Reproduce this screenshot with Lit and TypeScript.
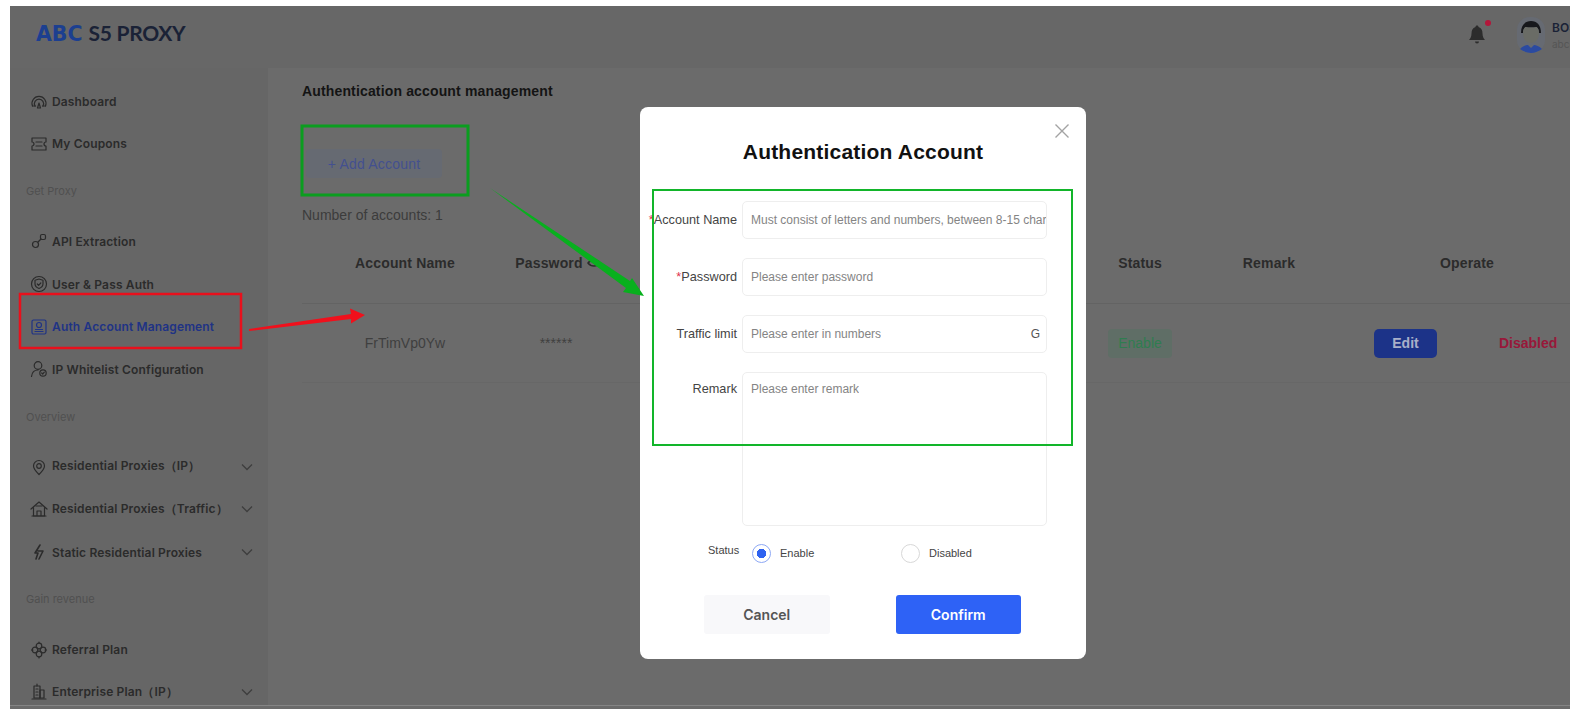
import { LitElement, html, css, svg } from "lit";
import { customElement } from "lit/decorators.js";

const ic = (p: unknown, size = 18) => html`<svg class="ic" width=${size} height=${size} viewBox="0 0 18 18" fill="none" stroke="currentColor" stroke-width="1.2" stroke-linecap="round" stroke-linejoin="round">${p}</svg>`;

const icons = {
  dash: svg`<path d="M2.5 14a7 7 0 1 1 13 0"/><path d="M5 14a4.6 4.6 0 1 1 8 0"/><path d="M2.5 14h3M12.500 14h3M7.500 16l1.500-5 1.500 5z"/>`,
  coupon: svg`<path d="M2 3h14v4a2 2 0 0 0 0 4v4H2v-4a2 2 0 0 0 0-4z"/><path d="M6 7h6M6 11h6"/>`,
  api: svg`<circle cx="5.500" cy="12.500" r="3"/><rect x="10.500" y="2.500" width="5" height="5" rx="1.500"/><path d="M8 10l3-3"/>`,
  shield: svg`<circle cx="9" cy="9" r="7.500"/><path d="M9 4l4 1.300v3.500c0 2.500-2 4-4 4.700-2-.7-4-2.200-4-4.700V5.300z"/><path d="M7.300 9l1.300 1.300 2.200-2.300"/>`,
  account: svg`<rect x="2" y="2" width="14" height="14" rx="1.500"/><circle cx="9" cy="7" r="2.500"/><path d="M5 13.500h8M5.500 11.500h7"/>`,
  white: svg`<circle cx="8" cy="5.500" r="3.800"/><path d="M1.500 16.500c.5-4 3-6.500 6.500-6.500"/><circle cx="13" cy="13" r="3.200"/><path d="M11.700 13l1 1 1.600-1.800"/>`,
  pin: svg`<path d="M9 16.500c-3.500-3.500-5.500-6-5.500-8.500a5.500 5.500 0 0 1 11 0c0 2.500-2 5-5.500 8.500z"/><circle cx="9" cy="8" r="2.300"/>`,
  home: svg`<path d="M1 9l8-7 8 7M3.500 7.500V16h11V7.500"/><path d="M2 16h14M7 16v-5h4v5M6 6h6"/>`,
  bolt: svg`<path d="M10 2L5 10h3l-2 6M8 8h5l-4 8" stroke-width="1.600"/>`,
  ref: svg`<circle cx="9" cy="5" r="2.800"/><circle cx="5" cy="9" r="2.800"/><circle cx="13" cy="9" r="2.800"/><circle cx="9" cy="13" r="2.800"/><path d="M1.500 9H3M15 9h1.500M9 1v1M9 16v1"/>`,
  build: svg`<rect x="4" y="3" width="6" height="12"/><rect x="10" y="7" width="4" height="8"/><path d="M2 16h14M6 6h2M6 9h2M6 12h2M7 3V1"/>`,
};

const chev = html`<svg class="chev" width="12" height="8" viewBox="0 0 12 8" fill="none" stroke="currentColor" stroke-width="1.300"><path d="M1 1.500l5 5 5-5"/></svg>`;

type Row = { t: "sec"; label: string } | { t: "item"; label: string; icon: unknown; chev?: boolean; active?: boolean };
const nav: Row[] = [
  { t: "item", label: "Dashboard", icon: icons.dash },
  { t: "item", label: "My Coupons", icon: icons.coupon },
  { t: "sec", label: "Get Proxy" },
  { t: "item", label: "API Extraction", icon: icons.api },
  { t: "item", label: "User & Pass Auth", icon: icons.shield },
  { t: "item", label: "Auth Account Management", icon: icons.account, active: true },
  { t: "item", label: "IP Whitelist Configuration", icon: icons.white },
  { t: "sec", label: "Overview" },
  { t: "item", label: "Residential Proxies（IP）", icon: icons.pin, chev: true },
  { t: "item", label: "Residential Proxies（Traffic）", icon: icons.home, chev: true },
  { t: "item", label: "Static Residential Proxies", icon: icons.bolt, chev: true },
  { t: "sec", label: "Gain revenue" },
  { t: "item", label: "Referral Plan", icon: icons.ref },
  { t: "item", label: "Enterprise Plan（IP）", icon: icons.build, chev: true },
];

@customElement("app-root")
export class AppRoot extends LitElement {
  static styles = css`
    :host { display: block; position: relative; width: 1576px; height: 718px; background: #fff; overflow: hidden; font-family: "Liberation Sans", Arial, sans-serif; box-sizing: border-box; padding: 6px 6px 9px 10px; }
    .app { height: 100%; background: #6b6b6b; display: flex; flex-direction: column; overflow: hidden; }
    .rule { flex: none; height: 1px; margin-bottom: 3px; background: #858585; }
    .top { height: 62px; flex: none; box-sizing: border-box; display: flex; align-items: center; padding: 0 0 4px 26px; background: #676767; }
    .logo { display: flex; align-items: baseline; gap: 6px; color: #1a2236; font-family: Lato, sans-serif; font-size: 21px; line-height: 24px; font-weight: 700; letter-spacing: -0.3px; margin-top: -3px; }
    .abc { color: #1c3f90; font-family: "DejaVu Sans", sans-serif; font-weight: 700; font-size: 20.500px; letter-spacing: 0; }
    .spacer { flex: 1; }
    .bell { position: relative; color: #2c2c2c; display: flex; margin-right: 30px; }
    .dot { position: absolute; right: -4px; top: -4px; width: 6px; height: 6px; border-radius: 50%; background: #b3163a; }
    .avatar { width: 28px; height: 36px; margin-right: 7px; flex: none; display: block; }
    .who { width: 18px; overflow: hidden; white-space: nowrap; font-family: Inter, sans-serif; }
    .who b { display: block; font-size: 12px; line-height: 15px; color: #1a2236; font-weight: 600; }
    .who span { display: block; font-size: 10px; line-height: 14px; color: #555; margin-top: 2px; }
    .body { flex: 1; display: flex; min-height: 0; }
    .side { width: 258px; flex: none; background: #666; padding-top: 12px; font-family: Inter, sans-serif; overflow: hidden; }
    .item { height: 42.6px; display: flex; align-items: center; padding-left: 20px; gap: 4px; color: #2b2b2b; font-size: 12px; font-weight: 600; letter-spacing: 0.15px; white-space: nowrap; }
    .item.active { color: #1f3385; }
    .ic { flex: none; }
    .item .lbl { flex: 1; }
    .chev { color: #3e3e3e; margin-right: 15px; flex: none; }
    .sec { height: 32px; margin: 10px 0 13px; display: flex; align-items: center; padding-left: 16px; font-size: 11px; color: #505050; font-weight: 400; }
    .main { flex: 1; padding: 15px 0 0 34px; min-width: 0; }
    h2 { margin: 0; font-size: 14px; line-height: 16px; font-weight: 700; color: #141414; letter-spacing: 0.15px; }
    .add { margin-top: 50px; width: 136px; height: 29px; display: flex; align-items: center; justify-content: center; background: #666a72; border-radius: 4px; color: #43508f; font-size: 14px; letter-spacing: 0.2px; margin-left: 4px; }
    .count { margin-top: 29px; font-size: 14px; line-height: 16px; color: #3c3c3c; }
    .grid { display: grid; grid-template-columns: 206px 96px 486px 100px 174px 206px; align-items: center; text-align: center; }
    .head { height: 80px; font-size: 14px; font-weight: 700; letter-spacing: 0.15px; color: #2b2b2b; border-bottom: 1px solid #636363; }
    .row { height: 78px; font-size: 14px; color: #3f3f3f; border-bottom: 1px solid #676767; }
    .pw { display: flex; justify-content: center; align-items: center; gap: 4px; white-space: nowrap; margin-right: -4px; }
    .rem { padding-right: 16px; }
    .pill { display: inline-block; width: 64px; line-height: 29px; border-radius: 4px; background: #5f6e66; color: #2f7d50; }
    .ops { display: flex; align-items: center; }
    .edit { width: 63px; line-height: 29px; border-radius: 5px; background: #1c3388; color: #a9b0c9; font-weight: 700; margin-left: 10px; }
    .dis { color: #98183a; font-weight: 700; margin-left: 62px; }
    .modal { position: absolute; left: 640px; top: 107px; width: 446px; height: 552px; box-sizing: border-box; background: #fff; border-radius: 8px; padding-top: 31px; }
    .x { position: absolute; right: 16px; top: 16px; color: #a3a3a3; display: block; }
    h1 { margin: 0 0 35px; text-align: center; font-size: 21px; line-height: 28px; font-weight: 700; color: #111; letter-spacing: 0.2px; }
    .f { display: grid; grid-template-columns: 98px 305px; column-gap: 4px; row-gap: 19px; align-items: center; }
    .lab { text-align: right; font-size: 12.7px; color: #444; white-space: nowrap; margin-top: -1px; padding-right: 1px; }
    .req { color: #e0304a; }
    .input { box-sizing: border-box; height: 38px; border: 1px solid #eeeeee; border-radius: 5px; padding: 0 0 0 8px; display: flex; align-items: center; justify-content: space-between; font-size: 12px; color: #848484; white-space: nowrap; overflow: hidden; }
    .ph { overflow: hidden; }
    .g { color: #555; margin-right: 6px; flex: none; }
    .area { height: 154px; align-items: flex-start; padding-top: 9px; }
    .lab.top2 { align-self: start; padding-top: 11px; }
    .status { display: flex; align-items: center; margin: 16px 0 0 68px; font-size: 11px; color: #444; height: 22px; }
    .st { width: 31px; position: relative; top: -3px; }
    .radio { box-sizing: border-box; width: 19px; height: 19px; border-radius: 50%; border: 1.500px solid #d8d8d8; margin-right: 9px; flex: none; }
    .radio.on { border: 1.500px solid #8da8f5; background: radial-gradient(circle, #2e62f0 0 4.500px, #fff 5px); }
    .r1 { margin-left: 13px; width: 133px; display: flex; align-items: center; }
    .r2 { display: flex; align-items: center; margin-left: 16px; }
    .btns { display: flex; gap: 66px; margin: 31px 0 0 64px; }
    .btn { width: 125.500px; height: 39px; display: flex; align-items: center; justify-content: center; font-size: 14px; font-weight: 600; font-family: Inter, sans-serif; border-radius: 3px; }
    .cancel { background: #f8f8fa; color: #555; }
    .ok { background: #2e62f6; color: #fff; }
    .anno { position: absolute; left: 0; top: 0; pointer-events: none; display: block; }
  `;

  render() {
    return html`
      <div class="app">
        <header class="top">
          <div class="logo"><span class="abc">ABC</span><span>S5 PROXY</span></div>
          <div class="spacer"></div>
          <div class="bell">
            <svg width="20" height="22" viewBox="0 0 20 22" fill="currentColor"><path d="M10 1.500c1 0 1.500.7 1.500 1.500 3 .8 4 3.500 4 6.500 0 3 1 5 2.500 6.500H2c1.500-1.500 2.500-3.500 2.500-6.500 0-3 1-5.700 4-6.500 0-.8.500-1.500 1.500-1.500z"/><path d="M8 17.500h4a2 2 0 0 1-4 0z"/></svg>
            <span class="dot"></span>
          </div>
          <svg class="avatar" viewBox="0 0 28 36">
            <rect width="28" height="36" rx="13" fill="#666a72"/>
            <path d="M4 16C4 8 8 4 14 4s10 4 10 12h-2c0-3-1-5-2.500-6-3 .8-8 .8-11 0C7 11 6 13 6 16z" fill="#17181c"/>
            <path d="M6 16c0-3 1-5 2.500-6 3 .8 8 .8 11 0C21 11 22 13 22 16c0 6-3 10-8 10s-8-4-8-10z" fill="#6a6c66"/>
            <path d="M3 32c3-3 6-4 8-4l3 3 3-3c2 0 5 1 8 4-3 2-7 4-11 4s-8-2-11-4z" fill="#2b4aa0"/>
          </svg>
          <div class="who"><b>BOSS</b><span>abc@mail</span></div>
        </header>
        <div class="body">
          <aside class="side">
            ${nav.map((n) =>
              n.t === "sec"
                ? html`<div class="sec">${n.label}</div>`
                : html`<div class="item ${n.active ? "active" : ""}">${ic(n.icon)}<span class="lbl">${n.label}</span>${n.chev ? chev : ""}</div>`
            )}
          </aside>
          <main class="main">
            <h2>Authentication account management</h2>
            <div class="add">+ Add Account</div>
            <div class="count">Number of accounts: 1</div>
            <div class="table">
              <div class="grid head">
                <div>Account Name</div>
                <div class="pw">Password <svg width="14" height="10" viewBox="0 0 14 10" fill="none" stroke="currentColor" stroke-width="1.500"><path d="M1 5c3-4 9-4 12 0-3 4-9 4-12 0z"/></svg></div>
                <div></div>
                <div>Status</div>
                <div class="rem">Remark</div>
                <div>Operate</div>
              </div>
              <div class="grid row">
                <div>FrTimVp0Yw</div>
                <div>******</div>
                <div></div>
                <div><span class="pill">Enable</span></div>
                <div></div>
                <div class="ops"><span class="edit">Edit</span><span class="dis">Disabled</span></div>
              </div>
            </div>
          </main>
        </div>
        <div class="rule"></div>
      </div>

      <div class="modal">
        <svg class="x" width="16" height="16" viewBox="0 0 16 16" fill="none" stroke="currentColor" stroke-width="1.400"><path d="M1.500 1.500l13 13M14.500 1.500l-13 13"/></svg>
        <h1>Authentication Account</h1>
        <div class="f">
          <div class="lab"><span class="req">*</span>Account Name</div>
          <div class="input"><span class="ph">Must consist of letters and numbers, between 8-15 characters</span></div>
          <div class="lab"><span class="req">*</span>Password</div>
          <div class="input"><span class="ph">Please enter password</span></div>
          <div class="lab">Traffic limit</div>
          <div class="input"><span class="ph">Please enter in numbers</span><span class="g">G</span></div>
          <div class="lab top2">Remark</div>
          <div class="input area"><span class="ph">Please enter remark</span></div>
        </div>
        <div class="status">
          <span class="st">Status</span>
          <span class="r1"><span class="radio on"></span>Enable</span>
          <span class="r2"><span class="radio"></span>Disabled</span>
        </div>
        <div class="btns">
          <div class="btn cancel">Cancel</div>
          <div class="btn ok">Confirm</div>
        </div>
      </div>

      <svg class="anno" width="1576" height="718" viewBox="0 0 1576 718" fill="none">
        <rect x="20" y="294" width="221" height="54" stroke="#e8101c" stroke-width="2.500"/>
        <rect x="302" y="126" width="166" height="69" stroke="#0b9d1f" stroke-width="3"/>
        <rect x="653" y="190" width="419" height="255" stroke="#12b52a" stroke-width="2"/>
        <path d="M249 329L351 314L350 308.500L365 315L351 323.500L351 319L249 331z" fill="#f0101c"/>
        <path d="M490 188L630 281L632 278L644 296L623 292L626 288z" fill="#08b01e"/>
      </svg>
    `;
  }
}
